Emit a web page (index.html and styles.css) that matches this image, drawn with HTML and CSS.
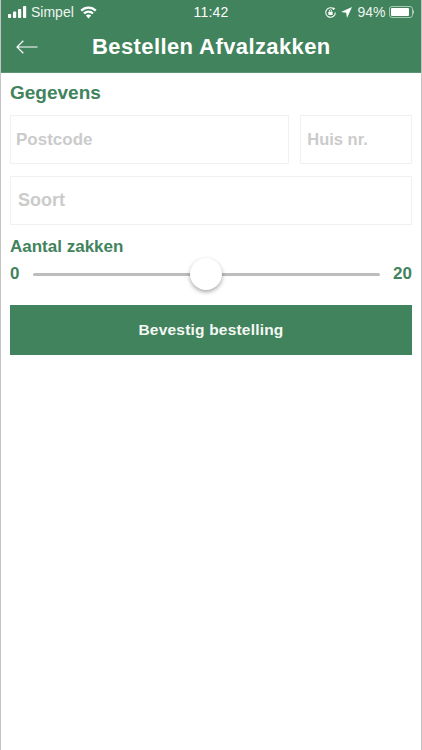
FILE: index.html
```html
<!DOCTYPE html>
<html lang="nl">
<head>
<meta charset="utf-8">
<title>Bestellen Afvalzakken</title>
<link rel="stylesheet" href="styles.css">
</head>
<body>
<div class="phone">
  <header class="top">
    <div class="status">
      <div class="status-left">
        <svg class="signal" width="19" height="12" viewBox="0 0 19 12"><rect x="0" y="8" width="3.2" height="4" rx=".8"/><rect x="5" y="5.500" width="3.2" height="6.500" rx=".8"/><rect x="10" y="3" width="3.2" height="9" rx=".8"/><rect x="15" y="0" width="3.2" height="12" rx=".8"/></svg>
        <span class="carrier">Simpel</span>
        <svg class="wifi" width="17" height="13" viewBox="0 0 17 13"><path d="M1.200 4.600C5.300.5 11.700.5 15.800 4.600" fill="none" stroke="#fff" stroke-width="2.200"/><path d="M4 7.500c2.500-2.500 6.500-2.500 9 0" fill="none" stroke="#fff" stroke-width="2.200"/><path d="M8.500 8.400c-1 0-1.900.4-2.600 1l2.600 3 2.600-3c-.7-.6-1.600-1-2.600-1z" fill="#fff"/></svg>
      </div>
      <span class="clock">11:42</span>
      <div class="status-right">
        <svg class="lock" width="13" height="13" viewBox="0 0 13 13"><path d="M11.300 6.500a4.800 4.800 0 1 1-1.500-3.500" fill="none" stroke="#fff" stroke-width="1.100"/><path d="M9 1.200l2.300 1.600-2.400 1.500z" fill="#fff"/><rect x="4.400" y="5.800" width="4.200" height="3.200" rx=".5" fill="#fff"/><path d="M5.300 5.800V5a1.200 1.200 0 0 1 2.400 0v.8" fill="none" stroke="#fff" stroke-width=".8"/></svg>
        <svg class="loc" width="11" height="11" viewBox="0 0 11 11"><path d="M11 0L0 5l5.200.8L6 11z" fill="#fff"/></svg>
        <span class="pct">94%</span>
        <div class="battery"><div class="battery-body"><div class="battery-fill"></div></div><div class="battery-cap"></div></div>
      </div>
    </div>
    <div class="nav">
      <svg class="back" width="22" height="14" viewBox="0 0 22 14"><path d="M21.500 7H1M7.300 .8L1 7l6.300 6.200" fill="none" stroke="#fff" stroke-width="1.200"/></svg>
      <h1 class="title">Bestellen Afvalzakken</h1>
    </div>
  </header>
  <main class="form">
    <h2 class="heading">Gegevens</h2>
    <div class="row">
      <div class="field field-postcode"><span class="ph">Postcode</span></div>
      <div class="field field-huis"><span class="ph ph-huis">Huis nr.</span></div>
    </div>
    <div class="field field-soort"><span class="ph ph-soort">Soort</span></div>
    <div class="label">Aantal zakken</div>
    <div class="slider-row">
      <span class="end">0</span>
      <div class="track"><div class="thumb"></div></div>
      <span class="end">20</span>
    </div>
    <button class="confirm" type="button">Bevestig bestelling</button>
  </main>
</div>
</body>
</html>
```
FILE: styles.css
```css
* { box-sizing: border-box; }
html, body { margin: 0; padding: 0; background: #fff; }
body { font-family: "Liberation Sans", Arial, sans-serif; }
.phone {
  width: 422px;
  height: 750px;
  border-left: 1px solid #c4c4c4;
  border-right: 1px solid #c4c4c4;
  background: #fff;
  overflow: hidden;
}
.top {
  height: 73px;
  margin: 0 -1px;
  background: #41835c;
  color: #fff;
  border-bottom: 1px solid #5c9274;
}
.status {
  height: 24px;
  padding: 0 8px 0 8px;
  display: grid;
  grid-template-columns: 1fr auto 1fr;
  align-items: center;
  font-size: 14px;
}
.status-left, .status-right { display: flex; align-items: center; }
.status-right { justify-content: flex-end; }
.signal { fill: #fff; }
.carrier { margin-left: 4px; margin-right: 6px; color: #eef4f0; }
.clock { font-size: 14px; letter-spacing: .2px; }
.lock { margin-right: 4px; }
.loc { margin-right: 5px; }
.pct { color: #eef4f0; margin-right: 3px; }
.battery { display: flex; align-items: center; }
.battery-body {
  width: 24px;
  height: 12px;
  border: 1px solid #a9c7b5;
  border-radius: 3px;
  padding: 1px;
}
.battery-fill { width: 92%; height: 100%; background: #fff; border-radius: 1px; }
.battery-cap { width: 1.500px; height: 4px; background: #a9c7b5; border-radius: 0 1px 1px 0; }
.nav {
  height: 47px;
  display: flex;
  align-items: center;
  padding: 0 0 2px 16px;
}
.title {
  margin: 0 0 0 54px;
  font-size: 22px;
  font-weight: 700;
  letter-spacing: .4px;
  line-height: 26px;
  white-space: nowrap;
}
.form {
  padding: 0 9px;
  display: flex;
  flex-direction: column;
}
.heading {
  margin: 9px 0 0;
  font-size: 19px;
  line-height: 22px;
  font-weight: 700;
  color: #41835c;
}
.row { display: flex; gap: 11px; margin-top: 11px; }
.field {
  height: 49px;
  border: 1px solid #f1f1f1;
  display: flex;
  align-items: center;
  background: #fff;
}
.field-postcode { width: 280px; padding-left: 5px; }
.field-huis { width: 112px; padding-left: 6px; }
.field-soort { margin-top: 12px; padding-left: 7px; }
.ph { font-size: 17px; font-weight: 700; color: #cbcbcb; }
.ph-huis { font-size: 16.500px; }
.ph-soort { font-size: 18px; }
.label {
  margin-top: 12px;
  font-size: 17px;
  line-height: 20px;
  font-weight: 700;
  color: #41835c;
}
.slider-row {
  height: 30px;
  margin-top: 2px;
  display: flex;
  align-items: center;
  justify-content: space-between;
}
.end { font-size: 17px; font-weight: 700; color: #41835c; }
.track {
  position: relative;
  flex: 1;
  height: 3px;
  margin: 0 13px 0 14px;
  background: #bdbdbd;
  border-radius: 2px;
}
.thumb {
  position: absolute;
  left: 157px;
  top: -15px;
  width: 32px;
  height: 32px;
  border-radius: 50%;
  background: #fff;
  box-shadow: 0 2px 4px rgba(0, 0, 0, .35);
}
.confirm {
  margin-top: 16px;
  height: 50px;
  border: 0;
  background: #41835c;
  color: #f4f8f5;
  font-family: inherit;
  font-size: 15.500px;
  font-weight: 700;
  letter-spacing: .2px;
}
```
